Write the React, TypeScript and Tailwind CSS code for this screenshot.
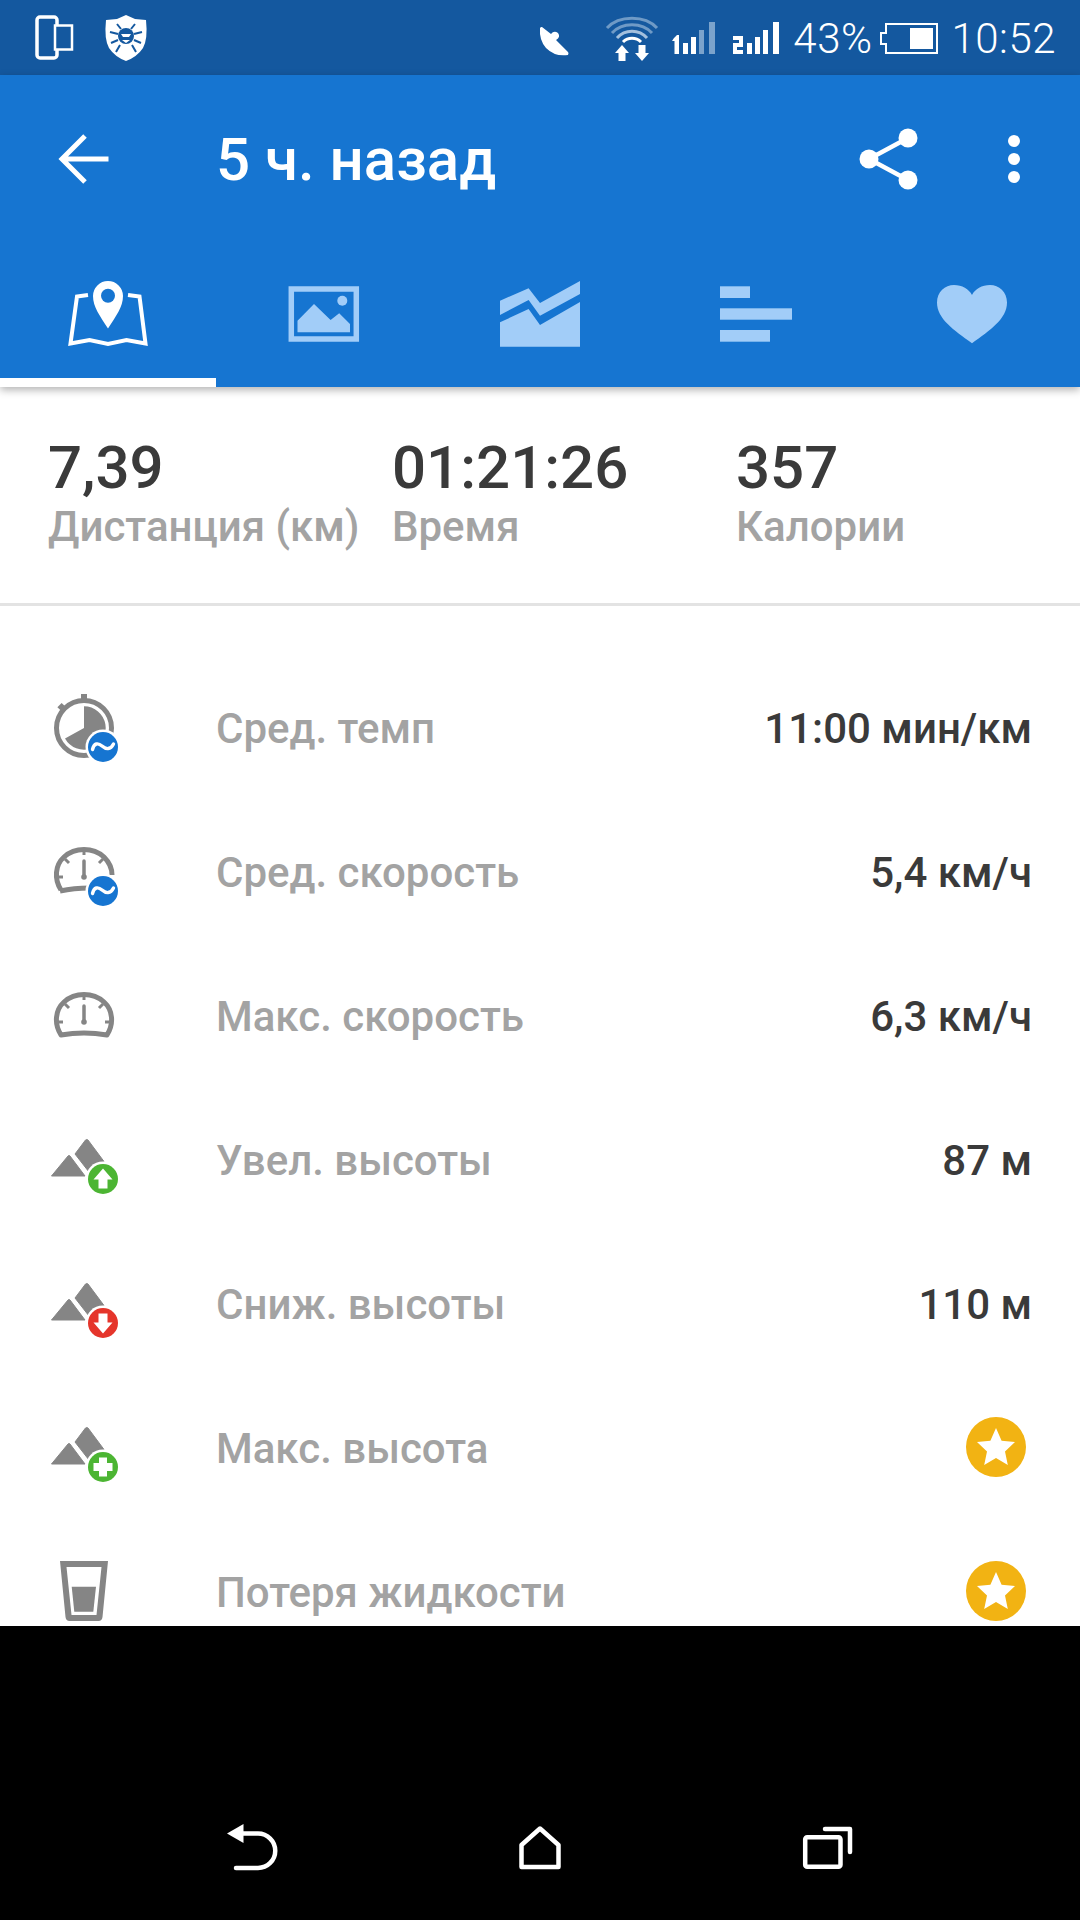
const LIGHT = '#a2cdf8';

function Badge({ color, children }: { color: string; children: React.ReactNode }) {
    return (
        <g>
            <circle cx="55" cy="54" r="17.5" fill="#fff" />
            <circle cx="55" cy="54" r="15" fill={color} />
            {children}
        </g>
    );
}

const Wave = () => (
    <path d="M44.5 56.5 C46 50 50 49.5 54 53 C58 56.5 62.5 57 65.5 51" fill="none" stroke="#fff" strokeWidth="3.4" strokeLinecap="round" />
);

const Mountains = () => (
    <g fill="#858585" stroke="#858585" strokeWidth="1" strokeLinejoin="round">
        <path d="M3.5 51 L20 31 Q21 30 22 31 L37 51 Z" />
        <path d="M27 29 L37.5 15 Q38.7 14 40 15 L56 36.5 L41 47 Z" />
    </g>
);

function RowIcon({ name }: { name: string }) {
    return (
        <svg width="72" height="72" viewBox="0 0 72 72" className="mr-[96px] shrink-0 overflow-visible">
            {name === 'pace' && (
                <>
                    <circle cx="36" cy="35" r="27.5" fill="none" stroke="#858585" strokeWidth="5" />
                    <rect x="33" y="1" width="6" height="7" fill="#858585" />
                    <rect x="11" y="11" width="6" height="7" fill="#858585" transform="rotate(-45 14 14.5)" />
                    <path d="M36 35 L36 13.3 A21.7 21.7 0 1 1 17 45.5 Z" fill="#858585" />
                    <Badge color="#1675d1"><Wave /></Badge>
                </>
            )}
            {name === 'avg' && (
                <>
                    <path d="M13 53 C6 42 7 28 16 20 C27 10 45 10 56 20 C61 25 64 31 64 38" fill="none" stroke="#858585" strokeWidth="5" />
                    <path d="M12 54 Q28 50.5 46 51" fill="none" stroke="#858585" strokeWidth="5" />
                    <path d="M36 13 V18 M17 22 L21 26 M55 22 L51 26 M9 40 H15" stroke="#858585" strokeWidth="3" />
                    <path d="M36 24 V39" stroke="#858585" strokeWidth="3.5" strokeLinecap="round" />
                    <circle cx="36" cy="40" r="2.8" fill="#858585" />
                    <Badge color="#1675d1"><Wave /></Badge>
                </>
            )}
            {name === 'max' && (
                <>
                    <path d="M13 54 C6 43 7 29 16 21 C27 11 45 11 56 21 C65 29 66 43 59 54 Q36 50 13 54 Z" fill="none" stroke="#858585" strokeWidth="5" strokeLinejoin="round" />
                    <path d="M36 14 V19 M17 23 L21 27 M55 23 L51 27 M9 41 H15 M63 41 H57" stroke="#858585" strokeWidth="3" />
                    <path d="M36 25 V40" stroke="#858585" strokeWidth="3.5" strokeLinecap="round" />
                    <circle cx="36" cy="41" r="2.8" fill="#858585" />
                </>
            )}
            {name === 'up' && (
                <>
                    <Mountains />
                    <Badge color="#4cb533">
                        <path d="M55 43.5 L64.5 54.5 H59.5 V63.5 H50.5 V54.5 H45.5 Z" fill="#fff" />
                    </Badge>
                </>
            )}
            {name === 'down' && (
                <>
                    <Mountains />
                    <Badge color="#e5352b">
                        <path d="M55 64.5 L64.5 53.5 H59.5 V44.5 H50.5 V53.5 H45.5 Z" fill="#fff" />
                    </Badge>
                </>
            )}
            {name === 'plus' && (
                <>
                    <Mountains />
                    <Badge color="#4cb533">
                        <path d="M51 44.5 H59 V50 H64.5 V58 H59 V63.5 H51 V58 H45.5 V50 H51 Z" fill="#fff" />
                    </Badge>
                </>
            )}
            {name === 'glass' && (
                <>
                    <path d="M12 4 H60 L54.5 60 Q54 64 50.5 64 H21.5 Q18 64 17.5 60 Z M18.5 10 L23.5 58 H48.5 L53.5 10 Z" fill="#858585" fillRule="evenodd" />
                    <path d="M23.7 29.7 H48 L45.3 54.7 H26.3 Z" fill="#858585" />
                </>
            )}
        </svg>
    );
}

const Star = () => (
    <svg width="60" height="60" viewBox="0 0 60 60" className="mb-[2px] mr-[6px] block">
        <circle cx="30" cy="30" r="30" fill="#f2b313" />
        <path d="M30 11 L35.6 23.7 L49 25 L39 34.4 L41.8 48 L30 41 L18.2 48 L21 34.4 L11 25 L24.4 23.7 Z" fill="#fff" />
    </svg>
);

const rows: { icon: string; label: string; value?: string }[] = [
    { icon: 'pace', label: 'Сред. темп', value: '11:00 мин/км' },
    { icon: 'avg', label: 'Сред. скорость', value: '5,4 км/ч' },
    { icon: 'max', label: 'Макс. скорость', value: '6,3 км/ч' },
    { icon: 'up', label: 'Увел. высоты', value: '87 м' },
    { icon: 'down', label: 'Сниж. высоты', value: '110 м' },
    { icon: 'plus', label: 'Макс. высота' },
    { icon: 'glass', label: 'Потеря жидкости' },
];

const stats = [
    { value: '7,39', label: 'Дистанция (км)' },
    { value: '01:21:26', label: 'Время' },
    { value: '357', label: 'Калории' },
];

function StatusBar() {
    return (
        <div className="flex h-[75px] items-center bg-[#14589f] pl-[35px] pr-[24px] text-white">
            <svg width="40" height="46" viewBox="0 0 40 46" className="shrink-0">
                <rect x="2" y="2" width="20" height="41" rx="3" fill="none" stroke="#fff" strokeWidth="3.5" />
                <rect x="20" y="10.5" width="17" height="24" fill="#14589f" stroke="#fff" strokeWidth="2.5" />
            </svg>
            <svg width="44" height="48" viewBox="0 0 44 48" className="ml-[29px] shrink-0">
                <path d="M22 1 L31 5 L42 6 Q44 25 39 34 Q33 43 22 47 Q11 43 5 34 Q0 25 2 6 L13 5 Z" fill="#fff" />
                <g stroke="#14589f" strokeWidth="2" fill="none">
                    <path d="M13 10 L17 15 M31 10 L27 15 M6 18 L14 20 M38 18 L30 20 M7 29 L14 26 M37 29 L30 26 M12 38 L16 31 M32 38 L28 31" />
                </g>
                <circle cx="22" cy="22" r="8" fill="#14589f" />
                <path d="M17 20 H27 L25 23 H19 Z M18 26 H26 L22 29 Z" fill="#fff" />
            </svg>
            <svg width="32" height="34" viewBox="0 0 32 34" className="ml-auto mt-[6px] shrink-0">
                <path d="M2 4 Q1 16 8 24 Q17 33 30 31 Q31 29 30 28 L18 16 Q23 13 20 9 Q16 6 13 10 L4 3 Q3 2.5 2 4 Z" fill="#fff" />
            </svg>
            <svg width="54" height="54" viewBox="0 0 54 54" className="ml-[35px] shrink-0">
                <g fill="none" strokeWidth="3">
                    <path d="M2 17 C14 4 40 4 52 17" stroke="#6f9ac6" />
                    <path d="M7 22 C17 11 37 11 47 22" stroke="#6f9ac6" />
                    <path d="M12 27 C20 18 34 18 42 27" stroke="#a4c0dd" />
                    <path d="M18 31 C23 26 31 26 36 31" stroke="#fff" />
                </g>
                <path d="M17 34 L24 42 H20.5 V50 H13.5 V42 H10 Z M37 50 L44 42 H40.5 V34 H33.5 V42 H30 Z" fill="#fff" />
            </svg>
            <svg width="46" height="34" viewBox="0 0 46 34" className="ml-[12px] shrink-0">
                <path d="M3 17 L6 14 H8 V33 H3.5 V20 H1 Z" fill="#fff" />
                <rect x="12" y="22" width="5" height="11" fill="#fff" />
                <rect x="20" y="16" width="5" height="17" fill="#fff" />
                <rect x="28" y="9" width="5" height="24" fill="#7ba3cc" />
                <rect x="38" y="1" width="6" height="32" fill="#7ba3cc" />
            </svg>
            <svg width="48" height="34" viewBox="0 0 48 34" className="ml-[15px] shrink-0">
                <path d="M1 15 H11 V26 H5 V29 H11 V33 H1 V22 H7 V19 H1 Z" fill="#fff" />
                <rect x="15" y="22" width="5" height="11" fill="#fff" />
                <rect x="23" y="16" width="5" height="17" fill="#fff" />
                <rect x="31" y="9" width="5" height="24" fill="#fff" />
                <rect x="41" y="1" width="6" height="32" fill="#fff" />
            </svg>
            <span className="ml-[13px] mt-[3px] text-[42px] font-light leading-none tracking-[0.5px]">43%</span>
            <svg width="58" height="32" viewBox="0 0 58 32" className="ml-[8px] shrink-0">
                <path d="M6 2 H57 V31 H6 V22 H1 V11 H6 Z" fill="none" stroke="#fff" strokeWidth="2" />
                <rect x="30" y="6" width="23" height="21" fill="#fff" />
            </svg>
            <span className="ml-[13px] mt-[3px] text-[42px] font-light leading-none tracking-[0.5px]">10:52</span>
        </div>
    );
}

function Tabs() {
    return (
        <div className="flex h-[113px]">
            <div className="flex h-full w-[216px] flex-col items-center border-b-[9px] border-white">
                <svg width="96" height="80" viewBox="0 0 96 80">
                    <path d="M28 21 L17 22.5 L10.5 69.5 L29.5 66 L48 70 L66.5 66 L85.5 69.5 L79.5 22.5 L68 21" fill="none" stroke="#fff" strokeWidth="4" />
                    <path d="M48 54.5 C40 42 33 33 33 22 A15 15 0 0 1 63 22 C63 33 56 42 48 54.5 Z" fill="#fff" />
                    <circle cx="48" cy="21.7" r="7" fill="#1675d1" />
                </svg>
            </div>
            <div className="flex w-[216px] justify-center">
                <svg width="96" height="80" viewBox="0 0 96 80">
                    <rect x="15.3" y="15" width="65" height="50" fill="none" stroke={LIGHT} strokeWidth="5.5" />
                    <circle cx="66.3" cy="26.7" r="5" fill={LIGHT} />
                    <path d="M21.5 58.3 V46.7 L38 30 L54.6 46 L63.2 39.3 L74 50 V58.3 Z" fill={LIGHT} />
                </svg>
            </div>
            <div className="flex w-[216px] justify-center">
                <svg width="96" height="80" viewBox="0 0 96 80">
                    <path d="M8 26.7 L36.6 14.3 L48 29 L88 7 V20 L48 41.7 L36.6 26 L8 41 Z" fill={LIGHT} />
                    <path d="M8 48.3 L36.6 35 L48 51 L88 28 V72.7 H8 Z" fill={LIGHT} />
                </svg>
            </div>
            <div className="flex w-[216px] justify-center">
                <svg width="96" height="80" viewBox="0 0 96 80">
                    <rect x="12" y="12.3" width="30" height="11.7" fill={LIGHT} />
                    <rect x="12" y="34.3" width="72" height="11.4" fill={LIGHT} />
                    <rect x="12" y="56" width="50" height="11.7" fill={LIGHT} />
                </svg>
            </div>
            <div className="flex w-[216px] justify-center">
                <svg width="96" height="80" viewBox="0 0 96 80">
                    <path d="M48 69.3 C30 56 13 45 13 28.5 C13 18 21 11 30 11 C38 11 45 15 48 21 C51 15 58 11 66 11 C75 11 83 18 83 28.5 C83 45 66 56 48 69.3 Z" fill={LIGHT} />
                </svg>
            </div>
        </div>
    );
}

export default function App() {
    return (
        <div className="flex h-[1920px] w-[1080px] flex-col overflow-hidden bg-black font-['Roboto',sans-serif]">
            <StatusBar />
            <div className="relative z-10 h-[312px] bg-[#1675d1] shadow-[0_3px_8px_rgba(0,0,0,0.3)]">
                <div className="flex h-[199px] items-center pb-[31px] text-white">
                    <svg width="60" height="60" viewBox="0 0 60 60" className="ml-[54px] shrink-0">
                        <path d="M54.5 30 H8 M31 7 L8 30 L31 53" fill="none" stroke="#fff" strokeWidth="5" />
                    </svg>
                    <span className="ml-[102px] mt-[2px] text-[60px] font-medium leading-none">5 ч. назад</span>
                    <svg width="64" height="64" viewBox="0 0 64 64" className="ml-auto shrink-0">
                        <path d="M51 11 L12 32 L51 53" fill="none" stroke="#fff" strokeWidth="4.5" />
                        <circle cx="12" cy="32" r="9.5" fill="#fff" />
                        <circle cx="51" cy="11" r="9.5" fill="#fff" />
                        <circle cx="51" cy="53" r="9.5" fill="#fff" />
                    </svg>
                    <svg width="12" height="48" viewBox="0 0 12 48" className="ml-[87px] mr-[60px] shrink-0">
                        <circle cx="6" cy="6" r="6" fill="#fff" />
                        <circle cx="6" cy="24" r="6" fill="#fff" />
                        <circle cx="6" cy="42" r="6" fill="#fff" />
                    </svg>
                </div>
                <Tabs />
            </div>
            <div className="h-[1239px] shrink-0 overflow-hidden bg-white">
                <div className="flex h-[219px] border-b-[3px] border-[#e3e3e3] pl-[48px] pt-[47px]">
                    {stats.map((s) => (
                        <div key={s.label} className="w-[344px]">
                            <div className="text-[60px] font-medium leading-[68px] text-[#3a3a3a]">{s.value}</div>
                            <div className="text-[42px] font-medium leading-[50px] text-[#a3a3a3]">{s.label}</div>
                        </div>
                    ))}
                </div>
                <div className="pt-[51px]">
                    {rows.map((r) => (
                        <div key={r.label} className="flex h-[144px] items-center pl-[48px] pr-[48px]">
                            <RowIcon name={r.icon} />
                            <span className="mb-[2px] text-[42px] font-medium text-[#a3a3a3]">{r.label}</span>
                            <span className="mb-[2px] ml-auto text-[42px] font-medium text-[#3a3a3a]">
                                {r.value ?? <Star />}
                            </span>
                        </div>
                    ))}
                </div>
            </div>
            <div className="flex flex-1 justify-center gap-[216px] bg-black pt-[186px]">
                <svg width="72" height="72" viewBox="0 0 72 72">
                    <path d="M11 21.5 L27.5 12 V31 Z" fill="#fff" />
                    <path d="M27 21.5 H42 A17.2 17.2 0 0 1 42 56 H20" fill="none" stroke="#fff" strokeWidth="4.5" strokeLinecap="round" />
                </svg>
                <svg width="72" height="72" viewBox="0 0 72 72">
                    <path d="M36 16.5 L17.5 33 V55 H54.5 V33 Z" fill="none" stroke="#fff" strokeWidth="4.5" strokeLinejoin="round" />
                </svg>
                <svg width="72" height="72" viewBox="0 0 72 72">
                    <rect x="13.2" y="25.2" width="35.3" height="29.6" rx="2" fill="none" stroke="#fff" strokeWidth="4.5" />
                    <path d="M33 17 H58 V40" fill="none" stroke="#fff" strokeWidth="4.5" strokeLinecap="round" strokeLinejoin="round" />
                </svg>
            </div>
        </div>
    );
}
